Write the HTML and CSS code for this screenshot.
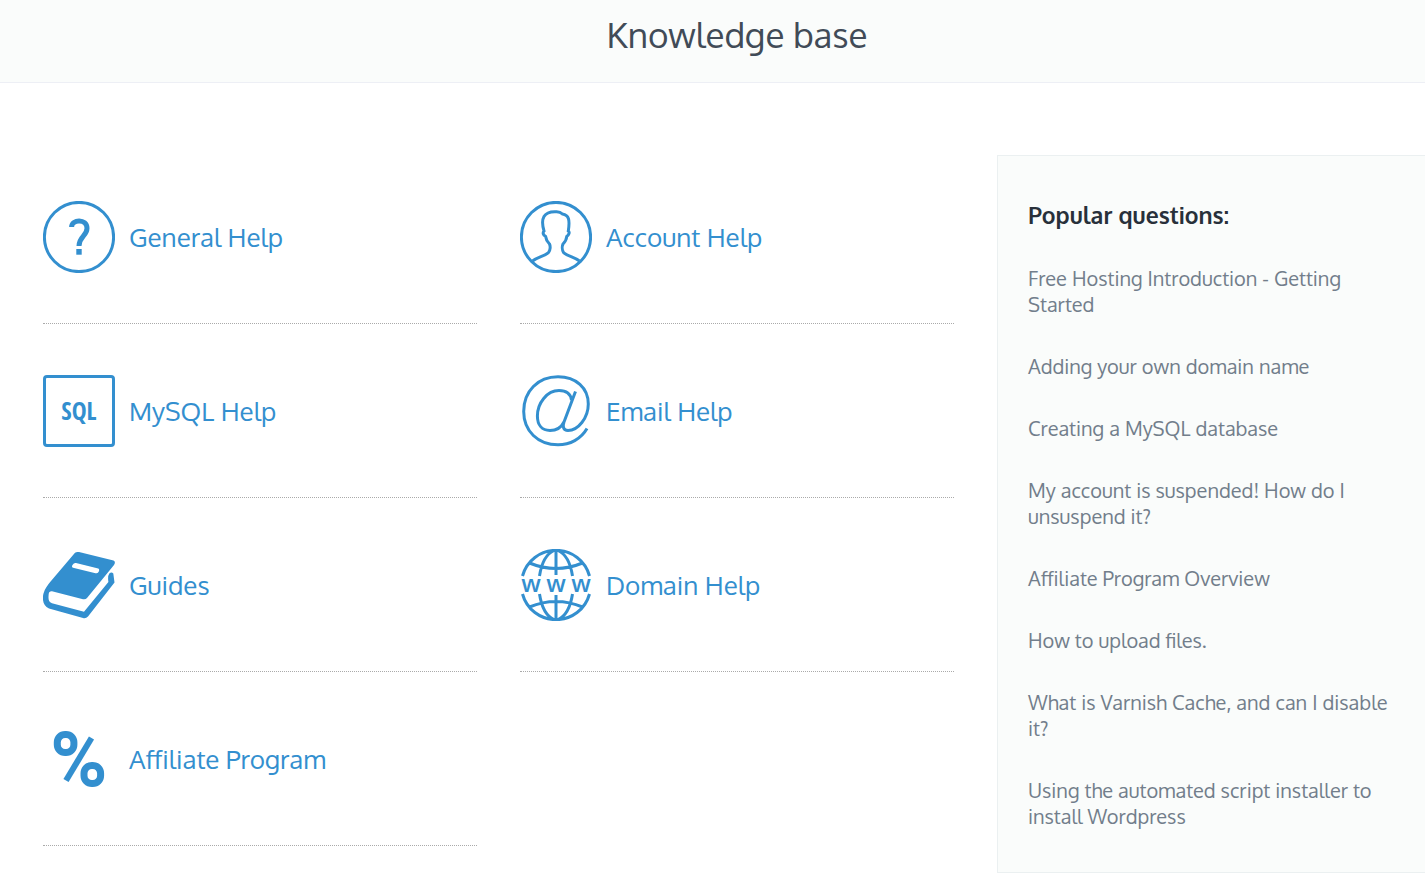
FILE: index.html
```html
<!DOCTYPE html>
<html lang="en">
<head>
<meta charset="utf-8">
<title>Knowledge base</title>
<link rel="stylesheet" href="styles.css">
</head>
<body>
<div class="page">
  <header class="page-header"><h1 class="page-title">Knowledge base</h1></header>
  <main class="content">
    <nav class="topics" aria-label="Topics">
      <a class="topic" href="#general">
        <svg class="icon" viewBox="0 0 72 72" aria-hidden="true"><circle cx="36" cy="36" r="34.6"/><path class="heavy" d="M28.600 26C28.500 18 44 17.500 44 27.200C44 35 36 35.500 36 45"/><path class="solid" d="M33.300 48h5.400v5.700h-5.400z"/></svg>
        <span>General Help</span>
      </a>
      <a class="topic" href="#account">
        <svg class="icon" viewBox="0 0 72 72" aria-hidden="true"><circle cx="36" cy="36" r="34.6"/><path d="M12.500 60C18 56 25 55 28.500 51.500C30.500 49 30.500 45 29.500 43C27.500 41 26 39 25.600 35.500C23 34 22.500 31.500 24 30C22.500 25 22 19 24 15.500C26 12 31 10.500 36 10.700C39 10.500 41 11.500 42.500 13C49 14 50 19 48.300 30C50 31 49 34 46.700 35.500C46.500 38.500 45 41 43 43C42 45 42 49 43.500 51.500C47 55 54 56 59.500 60"/></svg>
        <span>Account Help</span>
      </a>
      <a class="topic" href="#mysql">
        <svg class="icon" viewBox="0 0 72 72" aria-hidden="true"><rect x="1.5" y="1.5" width="69" height="69" rx="2.5"/><text class="sql" x="36" y="45">SQL</text></svg>
        <span>MySQL Help</span>
      </a>
      <a class="topic" href="#email">
        <svg class="icon" viewBox="0 0 72 72" aria-hidden="true"><path d="M67 53.500C61 64 50 69.800 38 69.800C18 69.800 3.700 56 3.700 36.500C3.700 16 18 1.800 38 1.800C56 1.800 68.300 13 68.300 29C68.300 43 58 55.500 48 55.500C43 55.500 42.500 51 44 47L55.500 16.500M51.500 25C50.500 18.500 46 15.600 39 15.600C27 15.600 17.400 28 17.400 41C17.400 50 22 55.500 30 55.500C36 55.500 41 53 44 47"/></svg>
        <span>Email Help</span>
      </a>
      <a class="topic" href="#guides">
        <svg class="icon" viewBox="0 0 72 72" aria-hidden="true"><path class="solid" fill-rule="evenodd" d="M32 3.700Q33.700 2.500 36 3.100L70.500 11.500Q73 12.700 71 16L44 49Q42.500 50.800 40 50.200L9 42.300Q6 42 5.700 45C5.300 49 5 53 9 54.300L41 62.800L65.400 33Q64.500 27 66.300 24.500Q68.500 22.700 70.300 24.500L71.500 33.500L45 67.500Q43 69.700 40 69L6 59.500C0 57 -1 50 .5 44.500C2 39 5 36 8 32ZM33 14L55.200 19.600Q57 20.500 55.500 23Q54.500 24.700 52.500 24.200L30 18.700Q28.300 18 29.500 16Q31 13.500 33 14Z"/></svg>
        <span>Guides</span>
      </a>
      <a class="topic" href="#domain">
        <svg class="icon" viewBox="0 0 72 72" aria-hidden="true"><path d="M2.500 27A34.700 34.700 0 0 1 69.500 27M2.500 45A34.700 34.700 0 0 0 69.500 45M36 1V26M36 46V71M19.500 27C21.500 14 26 5 34 1.500M52.500 27C50.500 14 46 5 38 1.500M19.500 45C21.500 58 26 67 34 70.500M52.500 45C50.500 58 46 67 38 70.500M9.500 14Q36 25 62.500 14M9.500 58Q36 47 62.500 58"/><text class="www" x="11 36 61" y="43">www</text></svg>
        <span>Domain Help</span>
      </a>
      <a class="topic" href="#affiliate">
        <svg class="icon" viewBox="0 0 72 72" aria-hidden="true"><rect class="ring" x="14.3" y="11.5" width="16.600" height="18" rx="7.800"/><rect class="ring" x="41" y="42.5" width="16.600" height="18" rx="7.800"/><path class="slash" d="M48.500 15L23 57.500"/></svg>
        <span>Affiliate Program</span>
      </a>
    </nav>
    <aside class="popular">
      <h2 class="popular-title">Popular questions:</h2>
      <ul class="questions">
        <li><a href="#q1">Free Hosting Introduction - Getting Started</a></li>
        <li><a href="#q2">Adding your own domain name</a></li>
        <li><a href="#q3">Creating a MySQL database</a></li>
        <li><a href="#q4">My account is suspended! How do I unsuspend it?</a></li>
        <li><a href="#q5">Affiliate Program Overview</a></li>
        <li><a href="#q6">How to upload files.</a></li>
        <li><a href="#q7">What is Varnish Cache, and can I disable it?</a></li>
        <li><a href="#q8">Using the automated script installer to install Wordpress</a></li>
      </ul>
    </aside>
  </main>
</div>
</body>
</html>
```
FILE: styles.css
```css
* { box-sizing: border-box; }
body {
  margin: 0;
  overflow-x: hidden;
  background: #fff;
  font-family: Oxygen, "Noto Sans", "Open Sans", sans-serif;
}
a { text-decoration: none; }

/* The page is a little wider than the window, so the sidebar runs off its right side. */
.page { width: calc(100% + 49px); }

.page-header {
  padding: 10px 0 24px;
  border-bottom: 1px solid #edeff5;
  background: #fafcfb;
  text-align: center;
}
.page-title {
  margin: 0;
  color: #414b57;
  font-size: 35px;
  font-weight: 400;
  line-height: 48px;
}

.content {
  display: grid;
  grid-template-columns: repeat(3, minmax(0, 1fr));
  align-items: start;
  gap: 43px;
  padding: 67px 43px 0;
}
.topics {
  grid-column: span 2;
  display: grid;
  grid-template-columns: repeat(2, minmax(0, 1fr));
  column-gap: 43px;
}
.topic {
  display: flex;
  align-items: center;
  gap: 14px;
  padding: 51px 0 50px;
  border-bottom: 1px dotted #aaa;
  color: #338fcf;
  font-size: 26px;
  line-height: 32px;
}

.icon {
  flex: none;
  width: 72px;
  height: 72px;
  fill: none;
  stroke: #338fcf;
  stroke-width: 3px;
}
.icon .heavy { stroke-width: 5px; }
.icon .solid { fill: #338fcf; stroke: none; }
.icon .ring { stroke-width: 7px; }
.icon .slash { stroke-width: 6px; }
.icon text { fill: #338fcf; stroke: none; text-anchor: middle; }
.icon .sql { font: bold 25px "Open Sans Condensed", "Liberation Sans Narrow", "Noto Sans", sans-serif; }
.icon .www { font: 600 24px "Open Sans", "Noto Sans", sans-serif; }

.popular {
  margin-top: 5px;
  padding: 43px 30px;
  border: 1px solid #ebf0f1;
  background: #fafcfb;
}
.popular-title {
  margin: 0 0 34px;
  color: #28303a;
  font-size: 23px;
  font-weight: 600;
  line-height: 32px;
}
.questions {
  display: grid;
  gap: 36px;
  margin: 0;
  padding: 0;
  list-style: none;
  font-size: 20px;
  line-height: 26px;
}
.questions a { color: #727e8b; }
```
